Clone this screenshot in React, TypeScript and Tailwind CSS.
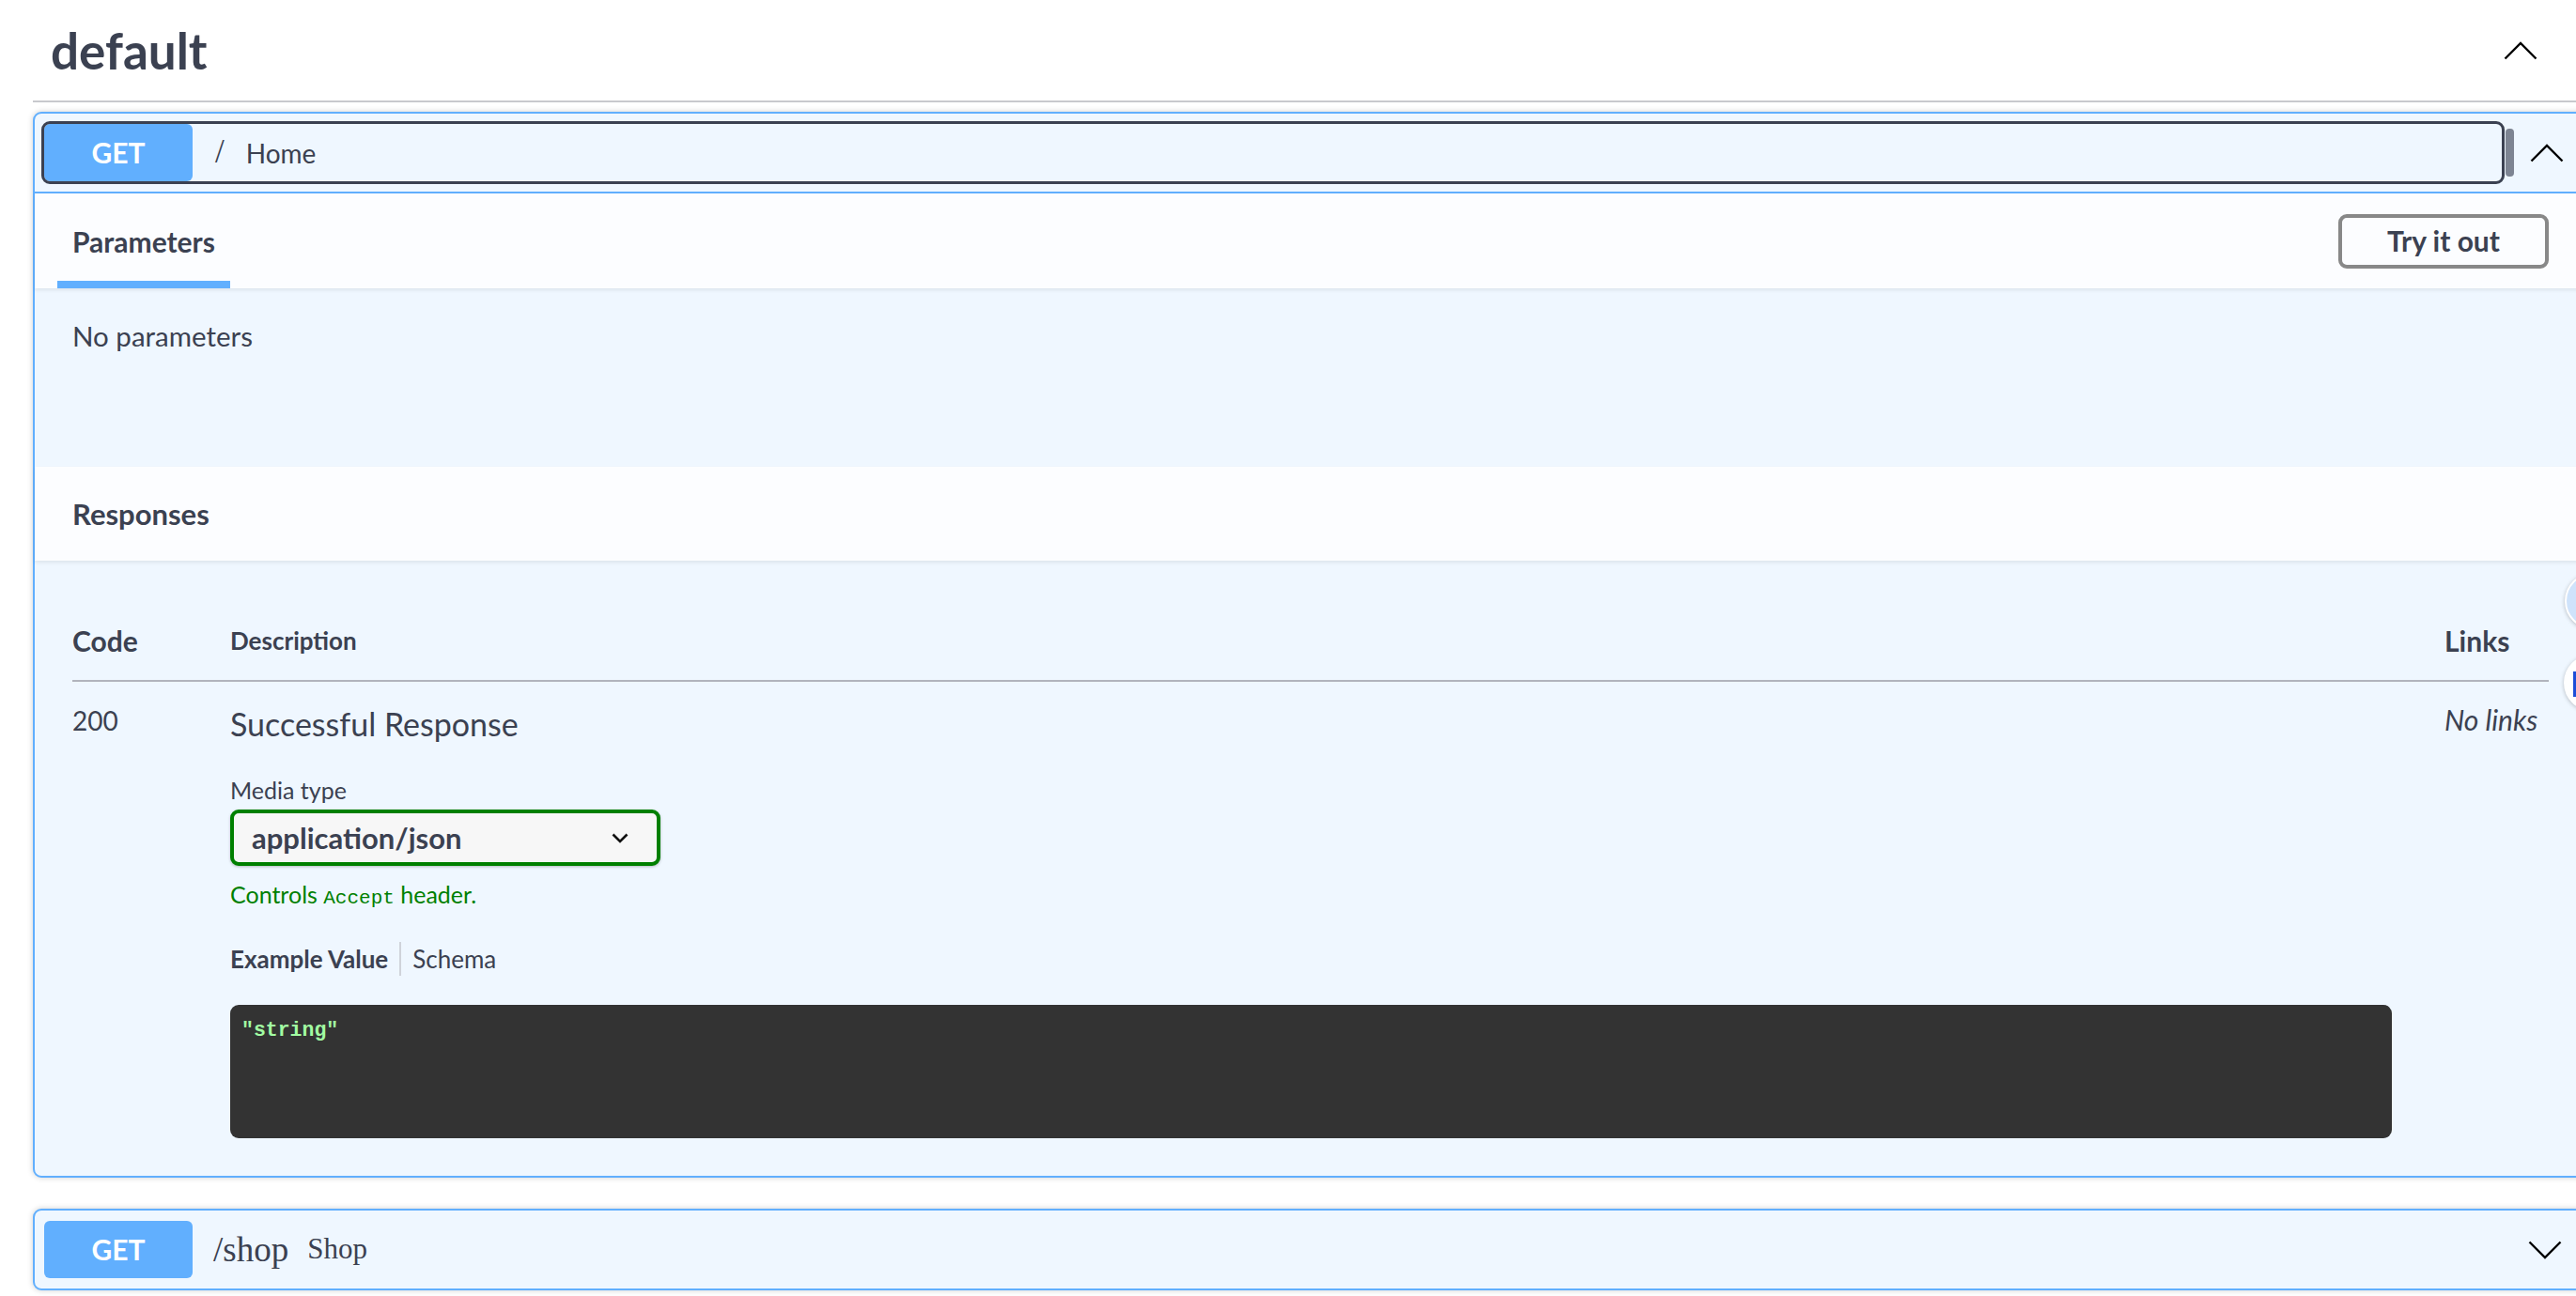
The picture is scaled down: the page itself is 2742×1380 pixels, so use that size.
function Chevron({ up, className }: { up?: boolean; className?: string }) {
  return (
    <svg viewBox="0 0 36 20" className={className} fill="none" stroke="currentColor" strokeWidth={2.4}>
      <polyline points={up ? "1.5,18.5 18,2 34.5,18.5" : "1.5,1.5 18,18 34.5,1.5"} />
    </svg>
  );
}

function GetBadge() {
  return (
    <div className="flex h-[61px] w-[158px] shrink-0 items-center justify-center rounded-[6px] bg-[#61affe] text-[30px] font-bold text-white">
      GET
    </div>
  );
}

export default function App() {
  return (
    <div className="relative h-[1380px] w-[2742px] overflow-hidden bg-white font-['Lato',sans-serif] text-[#3b4151]">
      <div className="ml-[35px] w-[2720px]">
        {/* tag heading */}
        <div className="flex h-[109px] items-center justify-between border-b-2 border-[#c8c9cd] pl-[19px] pr-[54px]">
          <h3 className="text-[53px] font-bold leading-none">default</h3>
          <Chevron up className="h-[20px] w-[36px] text-black" />
        </div>

        {/* GET / Home (expanded) */}
        <div className="mt-[10px] rounded-[9px] border-2 border-[#61affe] bg-[#eff7ff] shadow-[0_0_6px_rgba(0,0,0,0.19)]">
          <div className="flex items-center border-b-2 border-[#61affe] py-[11px] pl-[10px] pr-[24px]">
            <div className="flex flex-1 items-center rounded-[6px] outline-3 outline-[#3b4151]">
              <GetBadge />
              <span className="ml-[24px] font-['Liberation_Serif',serif] text-[35px] font-light">/</span>
              <span className="ml-[23px] text-[28px]">Home</span>
            </div>
            <div className="ml-[4px] h-[51px] w-[9px] rounded-[4px] bg-[#7d8492]" />
            <Chevron up className="ml-[17px] h-[20px] w-[36px] text-black" />
          </div>

          {/* parameters */}
          <div className="flex h-[101px] items-stretch justify-between bg-[#fcfdff] pl-[24px] pr-[40px] shadow-[0_2px_4px_rgba(0,0,0,0.08)]">
            <div className="flex flex-col justify-end">
              <div className="px-[16px] text-[30px] font-bold leading-[37px]">Parameters</div>
              <div className="mt-[23px] h-[8px] bg-[#61affe]" />
            </div>
            <button className="self-center h-[58px] w-[224px] rounded-[9px] border-4 border-[#888888] text-[30px] font-bold">
              Try it out
            </button>
          </div>
          <div className="h-[190px] pl-[40px] pt-[33px] text-[29.5px] leading-[36px]">No parameters</div>

          {/* responses */}
          <div className="flex h-[100px] items-center bg-[#fcfdff] pl-[40px] shadow-[0_2px_4px_rgba(0,0,0,0.08)]">
            <h4 className="text-[31px] font-bold">Responses</h4>
          </div>
          <div className="px-[40px] pb-[40px] pt-[43px]">
            <div className="flex h-[86px] items-center border-b-2 border-[#b1b4bd] font-bold">
              <div className="w-[168px] text-[30px]">Code</div>
              <div className="flex-1 text-[26px]">Description</div>
              <div className="w-[111px] text-[30px]">Links</div>
            </div>
            <div className="flex items-start pt-[24px]">
              <div className="w-[168px] text-[28px] leading-[34px]">200</div>
              <div className="flex-1">
                <div className="text-[34px] leading-[42px]">Successful Response</div>
                <div className="mt-[34px] text-[25px] leading-[30px]">Media type</div>
                <div className="mt-[6px] flex h-[60px] w-[458px] items-center justify-between rounded-[9px] border-4 border-[#008000] bg-[#f7f7f7] pl-[19px] pr-[30px] shadow-[0_1px_3px_rgba(0,0,0,0.25)]">
                  <span className="text-[31px] font-bold">application/json</span>
                  <svg viewBox="0 0 18 11" className="h-[11px] w-[18px]" fill="none" stroke="#111" strokeWidth={2.6}>
                    <polyline points="1.5,1.5 9,9 16.5,1.5" />
                  </svg>
                </div>
                <div className="mt-[15px] text-[25px] leading-[30px] text-[#008000]">
                  Controls <code className="font-['Liberation_Mono',monospace] text-[21px]">Accept</code> header.
                </div>
                <div className="mt-[31px] flex h-[36px] items-center text-[26px]">
                  <span className="font-bold">Example Value</span>
                  <span className="mx-[12px] h-[36px] w-[2px] bg-[#cfd3da]" />
                  <span>Schema</span>
                </div>
                <pre className="mt-[31px] h-[142px] w-[2301px] rounded-[9px] bg-[#333333] px-[12px] pt-[14px] font-['Liberation_Mono',monospace] text-[21.5px] font-bold leading-[26px] text-[#a2fca2]">
                  "string"
                </pre>
              </div>
              <div className="-mt-[2px] w-[111px] text-[30px] italic leading-[36px]">No links</div>
            </div>
          </div>
        </div>

        {/* GET /shop Shop (collapsed) */}
        <div className="mt-[33px] flex items-center rounded-[9px] border-2 border-[#61affe] bg-[#eff7ff] py-[11px] pl-[10px] pr-[26px] shadow-[0_0_6px_rgba(0,0,0,0.19)]">
          <div className="flex flex-1 items-center">
            <GetBadge />
            <span className="ml-[22px] font-['Liberation_Serif',serif] text-[37px]">/shop</span>
            <span className="ml-[20px] font-['Liberation_Serif',serif] text-[31px]">Shop</span>
          </div>
          <Chevron className="h-[20px] w-[36px] text-black" />
        </div>
      </div>

      {/* floating side widget, cut off by the window edge */}
      <div className="absolute left-[2730px] top-[610px] h-[60px] w-[60px] rounded-full border-2 border-white bg-[#cfe3fb] shadow-[0_1px_4px_rgba(0,0,0,0.25)]" />
      <div className="absolute left-[2729px] top-[697px] h-[60px] w-[60px] rounded-full border-2 border-white bg-white shadow-[0_1px_4px_rgba(0,0,0,0.25)]">
        <div className="ml-[8px] mt-[16px] h-[27px] w-[8px] bg-[#1d4ed8]" />
      </div>
    </div>
  );
}
